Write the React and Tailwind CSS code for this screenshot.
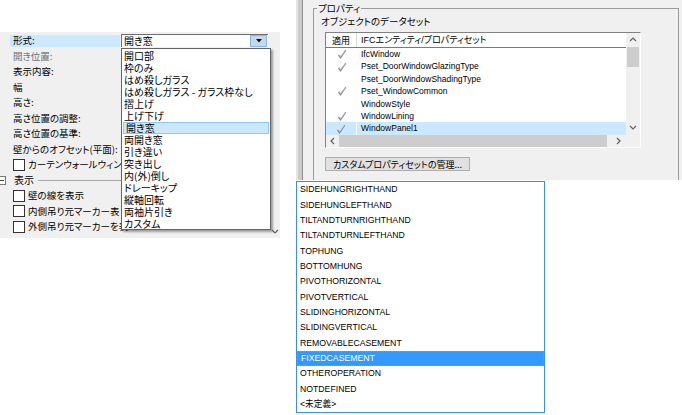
import React from "react";

const leftRows = [
  { type: "label", text: "形式:", active: true },
  { type: "label", text: "開き位置:", dim: true },
  { type: "label", text: "表示内容:" },
  { type: "label", text: "幅" },
  { type: "label", text: "高さ:" },
  { type: "label", text: "高さ位置の調整:" },
  { type: "label", text: "高さ位置の基準:" },
  { type: "label", text: "壁からのオフセット(平面):" },
  { type: "check", text: "カーテンウォールウィンド" },
  { type: "section", text: "表示" },
  { type: "check", text: "壁の線を表示" },
  { type: "check", text: "内側吊り元マーカー表" },
  { type: "check", text: "外側吊り元マーカーを表" },
];

const kinds = [
  "開口部",
  "枠のみ",
  "はめ殺しガラス",
  "はめ殺しガラス - ガラス枠なし",
  "摺上げ",
  "上げ下げ",
  "開き窓",
  "両開き窓",
  "引き違い",
  "突き出し",
  "内(外)倒し",
  "ドレーキップ",
  "縦軸回転",
  "両袖片引き",
  "カスタム",
];

const psets = [
  { name: "IfcWindow", on: true },
  { name: "Pset_DoorWindowGlazingType", on: true },
  { name: "Pset_DoorWindowShadingType", on: false },
  { name: "Pset_WindowCommon", on: true },
  { name: "WindowStyle", on: false },
  { name: "WindowLining", on: true },
  { name: "WindowPanel1", on: true, sel: true },
];

const operations = [
  "SIDEHUNGRIGHTHAND",
  "SIDEHUNGLEFTHAND",
  "TILTANDTURNRIGHTHAND",
  "TILTANDTURNLEFTHAND",
  "TOPHUNG",
  "BOTTOMHUNG",
  "PIVOTHORIZONTAL",
  "PIVOTVERTICAL",
  "SLIDINGHORIZONTAL",
  "SLIDINGVERTICAL",
  "REMOVABLECASEMENT",
  "FIXEDCASEMENT",
  "OTHEROPERATION",
  "NOTDEFINED",
  "<未定義>",
];

const Chevron = ({ dir }) => {
  const pts = {
    up: "1,5 4,2 7,5",
    down: "1,2 4,5 7,2",
    left: "5,1 2,4 5,7",
    right: "2,1 5,4 2,7",
  }[dir];
  return (
    <svg width="8" height="8" viewBox="0 0 8 8">
      <polyline points={pts} fill="none" stroke="#606060" strokeWidth="1.2" />
    </svg>
  );
};

const Check = () => (
  <svg width="10" height="10" viewBox="0 0 10 10">
    <path d="M1.5 6 L3.5 8.8 L8.8 1.2" fill="none" stroke="#8d8d8d" strokeWidth="1.3" />
    <path d="M2.8 5.6 L3.8 7 L8 1.6" fill="none" stroke="#d0d0d0" strokeWidth="0.7" />
  </svg>
);

const Box = () => <span className="w-[12px] h-[12px] border border-[#333] bg-white shrink-0" />;

function LeftPanel() {
  return (
    <div className="relative w-[280px] h-[206px] bg-[#f0f0f0] pt-[1px] overflow-hidden whitespace-nowrap text-[9.5px] leading-none">
      {leftRows.map((r, i) => {
        if (r.type === "section") {
          return (
            <div key={i} className="h-[15.5px] flex items-center">
              <span className="relative w-[6px] h-[9px] border border-l-0 border-[#7a7a7a] bg-white">
                <span className="absolute left-0 top-[3px] w-[4px] h-px bg-[#444]" />
              </span>
              <span className="ml-[8px] text-[10px]">{r.text}</span>
              <span className="flex-1 h-px bg-[#a8a8a8] ml-[4px] mr-[10px]" />
            </div>
          );
        }
        if (r.type === "check") {
          return (
            <div key={i} className="h-[15.5px] flex items-center pl-[13px] gap-[3px]">
              <Box />
              <span>{r.text}</span>
            </div>
          );
        }
        return (
          <div key={i} className="h-[15.5px] flex items-center">
            <div
              className={
                "ml-[10px] w-[110px] h-[12px] flex items-center pl-[3px] " +
                (r.active ? "bg-[#cce8ff]" : "") +
                (r.dim ? " text-[#6d6d6d]" : " text-black")
              }
            >
              {r.text}
            </div>
            {r.active && (
              <div className="ml-[1px] w-[147px] h-[13px] bg-white border-l border-t border-[#6f6f6f] flex items-center justify-between pl-[2px] pr-[1px]">
                <span className="text-[10px]">開き窓</span>
                <span className="w-[17px] h-[12px] bg-[#c4d8ee] border border-[#86b7e8] flex items-center justify-center">
                  <svg width="6" height="4" viewBox="0 0 6 4">
                    <polygon points="0,0 6,0 3,3.5" fill="#111" />
                  </svg>
                </span>
              </div>
            )}
          </div>
        );
      })}

      {/* popup list of the combo */}
      <div className="absolute left-[121px] top-[16px] w-[150px] h-[182px] bg-white border border-[#646464] shadow-[2px_2px_2px_rgba(0,0,0,0.35)] pt-[1px]">
        {kinds.map((k) => (
          <div
            key={k}
            className={
              "h-[12px] flex items-center pl-[2px] text-[10px] " +
              (k === "開き窓" ? "mx-[1px] bg-[#cce8ff] border border-[#8fc8f5]" : "")
            }
          >
            {k}
          </div>
        ))}
      </div>

      <div className="absolute right-[1px] bottom-[2px]">
        <Chevron dir="down" />
      </div>
    </div>
  );
}

function ListView() {
  return (
    <div className="ml-[11px] mt-[4px] w-[316px] h-[116px] border border-[#828282] border-r-white border-b-white flex flex-col bg-white text-[8.5px] leading-none font-['Liberation_Sans','Noto_Sans_CJK_JP',sans-serif]">
      <div className="h-[102px] flex">
        <div className="flex-1 flex flex-col">
          <div className="h-[15px] flex border-b border-[#7a7a7a] shrink-0">
            <div className="w-[31px] border-r border-[#d8d8d8] flex items-center justify-center text-[9px] font-['Noto_Sans_CJK_JP',sans-serif]">
              適用
            </div>
            <div className="flex-1 flex items-center pl-[4px] text-[9px]">IFCエンティティ/プロパティセット</div>
          </div>
          {psets.map((p) => (
            <div key={p.name} className="h-[12.4px] flex shrink-0">
              <div className={"w-[31px] flex items-center justify-center " + (p.sel ? "bg-[#cce8ff] border-r border-white" : "")}>
                {p.on && <Check />}
              </div>
              <div className={"flex-1 flex items-center pl-[4px] " + (p.sel ? "bg-[#cce8ff]" : "")}>{p.name}</div>
            </div>
          ))}
        </div>
        <div className="w-[14px] bg-[#f0f0f0] flex flex-col">
          <div className="h-[14px] flex items-center justify-center">
            <Chevron dir="up" />
          </div>
          <div className="h-[20px] mx-[1px] bg-[#cdcdcd]" />
          <div className="flex-1" />
          <div className="h-[14px] flex items-center justify-center">
            <Chevron dir="down" />
          </div>
        </div>
      </div>
      <div className="h-[12px] flex bg-[#f0f0f0]">
        <div className="w-[13px] flex items-center justify-center">
          <Chevron dir="left" />
        </div>
        <div className="w-[268px] bg-[#cdcdcd]" />
        <div className="flex-1 flex justify-end">
          <div className="w-[14px] flex items-center justify-center">
            <Chevron dir="right" />
          </div>
        </div>
        <div className="w-[14px]" />
      </div>
    </div>
  );
}

export default function App() {
  return (
    <div className="w-[682px] h-[415px] bg-white flex overflow-hidden text-black font-['Noto_Sans_CJK_JP',sans-serif] [font-feature-settings:'palt']">
      <div className="w-[296px] flex flex-col">
        <div className="h-[32px]" />
        <LeftPanel />
      </div>

      <div className="flex-1 flex flex-col">
        <div className="h-[180px] bg-[#f0f0f0] flex overflow-hidden">
          <div className="w-[7px] bg-[#cbcbcb] border-l-2 border-l-[#e4e4e4] border-r border-r-[#8f8f8f]" />
          <div className="flex-1 pl-[10px] pr-[3px]">
            <fieldset className="mt-[2px] h-[200px] border border-[#9b9b9b]">
              <legend className="ml-[3px] px-[1px] text-[9.5px] leading-[12px]">プロパティ</legend>
              <div className="mt-[2px] pl-[7px] h-[12px] flex items-center text-[9.5px] leading-none">
                オブジェクトのデータセット
              </div>
              <ListView />
              <button className="ml-[11px] mt-[9px] w-[145px] h-[14px] bg-[#e1e1e1] border border-[#adadad] text-[9px] leading-none flex items-center justify-center">
                カスタムプロパティセットの管理...
              </button>
            </fieldset>
          </div>
        </div>

        <div className="mt-[1px] w-[249px] h-[232px] border border-[#3d8ee0] bg-white text-[8.7px] leading-none font-['Liberation_Sans','Noto_Sans_CJK_JP',sans-serif]">
          {operations.map((o) => (
            <div
              key={o}
              className={
                "h-[15.33px] flex items-center pl-[3px] " +
                (o === "FIXEDCASEMENT" ? "bg-[#3399ff] text-white border border-dotted border-[#c98a4b] pl-[2px]" : "")
              }
            >
              {o}
            </div>
          ))}
        </div>
      </div>
    </div>
  );
}
